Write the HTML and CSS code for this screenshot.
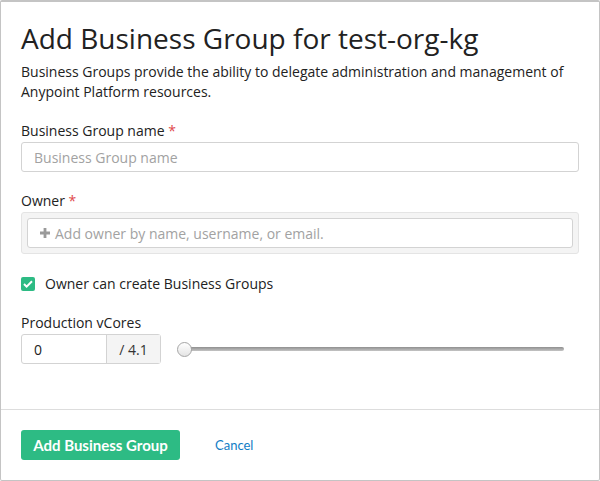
FILE: index.html
```html
<!DOCTYPE html>
<html>
<head>
<meta charset="utf-8">
<link rel="stylesheet" href="styles.css">
</head>
<body>
<div class="modal">
  <div class="modal-body">
    <h1 class="title">Add Business Group for test-org-kg</h1>
    <p class="desc">Business Groups provide the ability to delegate administration and management of Anypoint Platform resources.</p>

    <div class="field">
      <label class="label">Business Group name <span class="req">*</span></label>
      <div class="input"><span class="placeholder">Business Group name</span></div>
    </div>

    <div class="field">
      <label class="label">Owner <span class="req">*</span></label>
      <div class="owner-box">
        <div class="input inner">
          <svg class="plus" width="10" height="10" viewBox="0 0 10 10"><path d="M3.6 0h2.8v3.6H10v2.8H6.4V10H3.6V6.4H0V3.6h3.6z" fill="#9a9a9a"/></svg>
          <span class="placeholder">Add owner by name, username, or email.</span>
        </div>
      </div>
    </div>

    <div class="check-row">
      <span class="checkbox"><svg width="10" height="8" viewBox="0 0 10 8"><path d="M1 4l2.6 2.6L9 1.2" fill="none" stroke="#fff" stroke-width="2"/></svg></span>
      <span class="check-label">Owner can create Business Groups</span>
    </div>

    <div class="field vcores">
      <label class="label">Production vCores</label>
      <div class="vc-row">
        <div class="group">
          <div class="group-input">0</div>
          <div class="group-addon">/ 4.1</div>
        </div>
        <div class="slider">
          <div class="track"></div>
          <div class="thumb"></div>
        </div>
      </div>
    </div>
  </div>
  <div class="modal-footer">
    <button class="btn">Add Business Group</button>
    <a class="cancel">Cancel</a>
  </div>
</div>
</body>
</html>
```
FILE: styles.css
```css
* { box-sizing: border-box; }
html, body { margin: 0; padding: 0; background: #fff; }
body { font-family: "Open Sans", "Liberation Sans", sans-serif; color: #222; }
.modal {
  width: 600px;
  height: 481px;
  border: 1px solid #c4c4c4;
  border-top-width: 2px;
  border-radius: 2px;
  display: flex;
  flex-direction: column;
}
.modal-body {
  padding: 16px 20px 45px 20px;
  border-bottom: 1px solid #dddddd;
}
.title {
  margin: 0;
  font-size: 28px;
  font-weight: 400;
  line-height: 40px;
  color: #222;
}
.desc {
  margin: 4px 0 0 0;
  font-size: 14px;
  line-height: 20px;
  color: #222;
}
.field { margin-top: 19px; }
.label {
  display: block;
  font-size: 14px;
  line-height: 20px;
  margin-bottom: 1px;
}
.req { color: #e0484b; }
.input {
  height: 30px;
  border: 1px solid #d3d3d3;
  border-radius: 3px;
  background: #fff;
  display: flex;
  align-items: center;
  padding: 0 12px;
  font-size: 14px;
}
.placeholder { color: #a2a2a2; }
.owner-box {
  background: #f4f4f4;
  border: 1px solid #e4e4e4;
  border-radius: 3px;
  padding: 5px;
}
.input.inner { padding-left: 12px; gap: 5px; }
.plus { flex: none; }
.check-row {
  display: flex;
  align-items: center;
  margin-top: 20px;
  gap: 10px;
  font-size: 14px;
  line-height: 20px;
}
.checkbox {
  width: 14px;
  height: 14px;
  border-radius: 2px;
  background: #2dbb84;
  display: flex;
  align-items: center;
  justify-content: center;
}
.vc-row {
  display: flex;
  align-items: center;
  gap: 16px;
}
.group {
  display: flex;
  height: 30px;
  width: 140px;
  border: 1px solid #d3d3d3;
  border-radius: 3px;
  font-size: 14px;
}
.group-input {
  width: 85px;
  display: flex;
  align-items: center;
  padding-left: 12px;
  border-right: 1px solid #d3d3d3;
}
.group-addon {
  flex: 1;
  background: #f4f4f4;
  display: flex;
  align-items: center;
  justify-content: center;
  color: #333;
}
.slider {
  position: relative;
  width: 388px;
  height: 16px;
}
.track {
  position: absolute;
  left: 6px;
  right: 1px;
  top: 6px;
  height: 4px;
  border-radius: 2px;
  background: linear-gradient(#8f8f8f, #c4c4c4);
}
.thumb {
  position: absolute;
  left: 0;
  top: 1px;
  width: 15px;
  height: 15px;
  border-radius: 50%;
  border: 1px solid #a5a5a5;
  background: linear-gradient(#ffffff, #e4e4e4);
}
.modal-footer {
  flex: 1;
  display: flex;
  align-items: center;
  padding: 0 20px;
}
.btn {
  font-family: Lato, "Open Sans", sans-serif;
  font-weight: 700;
  font-size: 15px;
  color: #fff;
  background: #2dbb84;
  border: none;
  border-radius: 3px;
  height: 30px;
  width: 159px;
  padding: 0;
}
.cancel {
  font-family: Lato, "Open Sans", sans-serif;
  font-size: 13px;
  color: #127dc5;
  margin-left: 35px;
}
```
